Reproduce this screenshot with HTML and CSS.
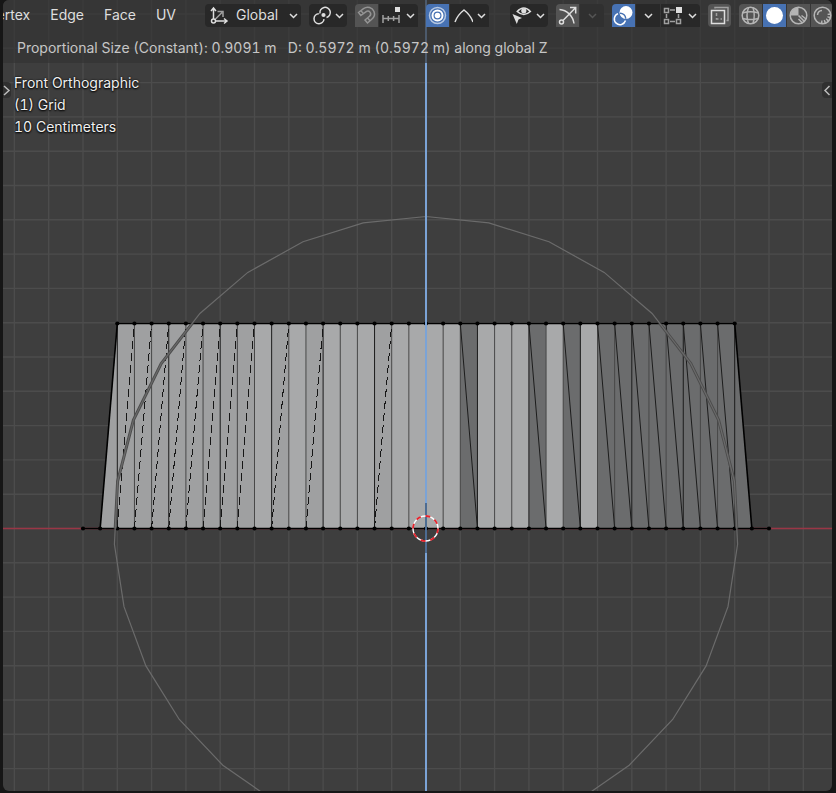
FILE: index.html
```html
<!DOCTYPE html>
<html lang="en">
<head>
<meta charset="utf-8">
<title>3D Viewport</title>
<link rel="stylesheet" href="styles.css">
</head>
<body>
<main class="editor">
  <svg class="scene" viewBox="3 0 829 791" preserveAspectRatio="xMidYMid slice" aria-label="Front orthographic view of a grid mesh">
    <defs>
      <clipPath id="mesh-clip"><path d="M117 323.500H735L752 528.500H100Z"/></clipPath>
    </defs>
    <g id="grid" class="grid"></g>
    <path class="axis-x" d="M0 528.500H836"/>
    <g id="faces"></g>
    <g id="edges"></g>
    <g id="circle"></g>
    <path class="axis-z" d="M426 0V503M426 553V793"/>
    <path class="axis-z-dim" d="M426 503V553"/>
    <circle class="cursor-base" cx="425.500" cy="528.500" r="12.500"/>
    <circle class="cursor-dash" cx="425.500" cy="528.500" r="12.500" pathLength="160"/>
  </svg>

  <header class="header">
    <nav class="menus">
      <button class="menu">Vertex</button>
      <button class="menu">Edge</button>
      <button class="menu">Face</button>
      <button class="menu">UV</button>
    </nav>

    <div class="orientation">
      <svg class="icon" viewBox="0 0 23 23"><path class="dim" d="M7 15.500L14 8.500M9.500 7.500H15V13"/><path d="M5.500 15V4M3 7L5.500 4L8 7M7.500 17H19M16 14.500L19 17L16 19.500"/><circle cx="5.500" cy="17" r="2"/></svg>
      <select aria-label="Transform orientation"><option>Global</option><option>Local</option><option>Normal</option></select>
      <svg class="chevron" viewBox="0 0 11 11"><path d="M2 4L5.500 7.500L9 4"/></svg>
    </div>

    <button class="pop" aria-label="Pivot point">
      <svg class="icon" viewBox="0 0 23 23"><path d="M11 9.500A5.200 5.200 0 1 1 17.500 13.500M9.800 9.700A5 5 0 1 0 15 15.200"/><circle class="solid" cx="14.500" cy="11" r="2.100"/></svg>
      <svg class="chevron" viewBox="0 0 11 11"><path d="M2 4L5.500 7.500L9 4"/></svg>
    </button>

    <div class="joined">
      <button class="toggle raised" aria-label="Snap">
        <svg class="icon muted" viewBox="0 0 23 23"><path d="M3.500 8.500L8.500 4.600C12.500 1.800 17.500 3.500 19 7.500C20.500 11.500 18.500 14 16.500 15.500L12.500 19L10 16L14.500 12.300C17.500 9.500 14 5.500 10.800 7.800L5.800 11.500ZM6 6.600L8.200 9.600M12.500 14L15 16.800"/></svg>
      </button>
      <button class="pop" aria-label="Snap to increment">
        <svg class="icon" viewBox="0 0 23 23"><path class="dim" d="M4 14.500H20M4 11V19M20 11V19M9.300 12V17M14.600 12V17"/><rect class="solid" x="16" y="3" width="5" height="5"/></svg>
        <svg class="chevron" viewBox="0 0 11 11"><path d="M2 4L5.500 7.500L9 4"/></svg>
      </button>
    </div>

    <div class="joined">
      <button class="toggle active" aria-label="Proportional editing">
        <svg class="icon" viewBox="0 0 23 23"><circle class="solid" cx="11.500" cy="11.500" r="2.800"/><circle class="heavy" cx="11.500" cy="11.500" r="5"/><circle class="faint" cx="11.500" cy="11.500" r="8"/></svg>
      </button>
      <button class="pop" aria-label="Proportional falloff">
        <svg class="icon" viewBox="0 0 23 23"><path d="M5 18Q7.500 11 14 6Q20.500 11 23 18"/></svg>
        <svg class="chevron" viewBox="0 0 11 11"><path d="M2 4L5.500 7.500L9 4"/></svg>
      </button>
    </div>

    <div class="tools">
      <button class="pop" aria-label="Visibility">
        <svg class="icon" viewBox="0 0 23 23"><path d="M7.200 7.500Q13.800 .5 20.400 7.500Q13.800 13.500 7.200 7.500Z"/><circle class="solid" cx="13.800" cy="6.800" r="2.600"/><path class="solid" d="M2.500 10L12 14L8.500 15.500L6.800 20Z"/></svg>
        <svg class="chevron" viewBox="0 0 11 11"><path d="M2 4L5.500 7.500L9 4"/></svg>
      </button>

      <div class="joined">
        <button class="toggle raised" aria-label="Gizmos">
          <svg class="icon" viewBox="0 0 23 23"><circle cx="5.500" cy="18" r="2"/><path d="M7 16.500L19.500 3.700M14 3.500H19.700V9.500M3.500 5.500C11 6 17 12 18 19.500"/></svg>
        </button>
        <button class="drop off" aria-label="Gizmo options"><svg class="chevron" viewBox="0 0 11 11"><path d="M2 4L5.500 7.500L9 4"/></svg></button>
      </div>

      <div class="joined">
        <button class="toggle active" aria-label="Overlays">
          <svg class="icon" viewBox="0 0 23 23"><circle class="solid" cx="14" cy="8.500" r="6.500"/><path d="M6 9.600A5.700 5.700 0 1 0 13.500 16.500"/><path class="cut" d="M8 9.200A5.700 5.700 0 0 1 13.800 14.800"/></svg>
        </button>
        <button class="drop" aria-label="Overlay options"><svg class="chevron" viewBox="0 0 11 11"><path d="M2 4L5.500 7.500L9 4"/></svg></button>
        <button class="pop" aria-label="Mesh edit overlays">
          <svg class="icon" viewBox="0 0 23 23"><path class="dim" d="M3.500 4.500H7.500V8.500H3.500ZM3.500 15.500H7.500V19.500H3.500ZM15.500 15.500H19.500V19.500H15.500ZM9 6H14M9 17.500H14M5.500 10V14M17.500 10V14"/><rect class="solid" x="15" y="3" width="6" height="6"/></svg>
          <svg class="chevron" viewBox="0 0 11 11"><path d="M2 4L5.500 7.500L9 4"/></svg>
        </button>
      </div>

      <button class="toggle raised single" aria-label="X-ray">
        <svg class="icon" viewBox="0 0 23 23"><path d="M3.500 6.500H16.500V19.500H3.500Z"/><path class="dim" d="M7 4.500V3.500H20V16.500H18.500"/><path class="dim" stroke-dasharray="3 2" d="M8.500 9V15H14"/></svg>
      </button>

      <div class="joined">
        <button class="toggle raised" aria-label="Wireframe">
          <svg class="icon soft" viewBox="0 0 23 23"><circle cx="11.500" cy="11.500" r="8.300"/><path d="M3.500 9Q11.500 6.500 19.500 9M3.500 14.500Q11.500 16.500 19.500 14.500M9.500 3.500Q6.500 11.500 9.500 19.500M14 3.500Q16.500 11.500 14 19.500"/></svg>
        </button>
        <button class="toggle active" aria-label="Solid">
          <svg class="icon" viewBox="0 0 23 23"><circle class="solid" cx="11.500" cy="11.500" r="8.500"/></svg>
        </button>
        <button class="toggle raised" aria-label="Material preview">
          <svg class="icon soft" viewBox="0 0 23 23"><circle cx="11.500" cy="11.500" r="8.300"/><path class="solid" d="M11.500 3.500V11.500H3.500A8 8 0 0 1 11.500 3.500Z"/><path d="M11.500 11.500L17.500 17.500M14.500 11.500L19 15M11.500 15L15.500 19"/></svg>
        </button>
        <button class="toggle raised" aria-label="Rendered">
          <svg class="icon soft" viewBox="0 0 23 23"><circle cx="11.500" cy="11.500" r="8.300"/><path d="M6.500 11A5 5 0 0 1 11 6.500"/><path stroke-dasharray="1.500 1.500" stroke-width="3" d="M18 9.500A7 7 0 0 1 8.500 17.500"/></svg>
        </button>
      </div>
    </div>
  </header>

  <p class="status">Proportional Size (Constant): 0.9091 m &nbsp; D: 0.5972 m (0.5972 m) along global Z</p>

  <section class="view">
    <button class="region-tab" aria-label="Show toolbar"><svg viewBox="0 0 8 16"><path d="M1 4L6 8.500L1 13"/></svg></button>
    <div class="info">
      <div>Front Orthographic</div>
      <div>(1) Grid</div>
      <div>10 Centimeters</div>
    </div>
    <button class="region-tab right" aria-label="Show sidebar"><svg viewBox="0 0 8 16"><path d="M6.500 4L2 8.500L6.500 13"/></svg></button>
  </section>
</main>
<script src="scene.js"></script>
</body>
</html>
```
FILE: styles.css
```css
* { box-sizing: border-box; }

body {
  margin: 0;
  background: #161616;
  color: #dedede;
  font: 14px/22px Inter, "Noto Sans", sans-serif;
  font-variant-numeric: tabular-nums;
}

.editor {
  position: relative;
  min-height: calc(100vh - 2px);
  margin: 0 4px 2px 3px;
  border-radius: 6px;
  background: #3e3e3e;
  overflow: hidden;
}

/* Scene drawing, behind the header and the overlays */
.scene { position: absolute; inset: 0; width: 100%; height: 100%; }
.grid { stroke: #4c4c4c; stroke-width: 1.4; }
.axis-x { stroke: #9a3646; stroke-width: 1.3; }
.axis-z { stroke: #7ba3d6; stroke-width: 2; }
.axis-z-dim { stroke: #4d6c92; stroke-width: 2; }
.face-light { fill: #a8a9aa; }
.face-mid { fill: #9fa0a1; }
.face-dark { fill: #6b6c6d; }
.edge { stroke: #1c1c1c; stroke-width: 1; }
.edge-soft { stroke: #484848; stroke-width: 1; }
.edge-bold { stroke: #000; stroke-width: 1.6; }
.edge-dash { stroke: #161616; stroke-width: 1; stroke-dasharray: 8 4; shape-rendering: crispEdges; }
.vertex { fill: #000; }
.influence { fill: none; stroke: #6b6b6b; stroke-width: 1.2; }
.influence-mesh { fill: none; stroke: #4c4c4c; stroke-width: 3; clip-path: url(#mesh-clip); }
.cursor-base { fill: none; stroke: #fff; stroke-width: 1.4; }
.cursor-dash { fill: none; stroke: #e8222c; stroke-width: 1.8; stroke-dasharray: 10 10; }

/* Header */
.header, .status { position: relative; background: rgba(50, 50, 50, .65); }
.header { display: flex; gap: 8px; height: 31px; padding-top: 4px; }
.menus {
  display: flex;
  flex: 0 0 194px;
  justify-content: flex-end;
  padding-right: 11px;
  overflow: hidden;
}
button, select {
  margin: 0;
  padding: 0;
  border: 0;
  background: none;
  color: inherit;
  font: inherit;
}
.menu { padding: 0 10px; height: 22px; }
.orientation, .pop, .drop, .toggle {
  display: flex;
  flex: none;
  align-items: center;
  height: 23px;
}
.orientation, .pop, .drop { background: #282828; }
.orientation { position: relative; width: 96px; border-radius: 4px; padding-left: 3px; }
.orientation select { appearance: none; flex: 1; height: 22px; align-self: flex-start; padding-left: 5px; }
.orientation .chevron { margin-right: 2px; }
.pop { width: 38px; border-radius: 4px; justify-content: space-between; padding: 0 2px 0 0; }
.drop { width: 24px; justify-content: center; }
.drop.off { background: #303030; color: #555; }
.toggle { width: 23px; justify-content: center; }
.raised { background: #545454; }
.active { background: #4772b3; color: #fff; }
.single { border-radius: 4px; }
.joined { display: flex; flex: none; gap: 1px; border-radius: 4px; overflow: hidden; }
.joined .pop { width: 39px; border-radius: 0; }
.tools { display: flex; gap: 8px; margin-left: 13px; }

.icon { width: 23px; height: 23px; }
.chevron { width: 11px; height: 11px; }
.icon, .chevron, .region-tab svg { flex: none; fill: none; stroke: currentColor; stroke-width: 1.5; }
.solid { fill: currentColor; stroke: none; }
.heavy { stroke-width: 2; }
.dim { stroke: #a0a0a0; }
.faint { stroke: #b5c7e1; }
.cut { stroke: #4772b3; }
.muted { color: #949494; }
.soft { color: #b4b4b4; }

.status { height: 32px; margin: 0; padding-left: 14px; line-height: 33px; color: #c6c6c6; white-space: nowrap; overflow: hidden; }

/* Viewport overlays */
.view { position: relative; display: flex; align-items: flex-start; padding-top: 9px; }
.info { flex: 1; padding-left: 3px; color: #f0f0f0; text-shadow: 0 0 2px #000, 0 1px 2px #000; }
.region-tab { width: 8px; height: 16px; margin-top: 10px; background: #303030; border-radius: 0 4px 4px 0; color: #bbb; }
.region-tab.right { width: 10px; border-radius: 4px 0 0 4px; }
.region-tab svg { display: block; width: 8px; height: 16px; margin: 0 auto; }
```
FILE: scene.js
```js
const NS = "http://www.w3.org/2000/svg";
const CX = 426, TOP = 323.5, BASE = 528.5, STEP = 17.15;

function add(group, tag, attrs) {
  const el = document.createElementNS(NS, tag);
  for (const name in attrs) el.setAttribute(name, attrs[name]);
  document.getElementById(group).appendChild(el);
}
const px = k => CX + k * STEP;
const line = (cls, x1, y1, x2, y2, group = "edges") =>
  add(group, "path", { class: cls, d: `M${x1} ${y1}L${x2} ${y2}` });

// Background grid, one line per 10 cm
for (let k = -15; k <= 13; k++) {
  line("", px(2 * k), 0, px(2 * k), 793, "grid");
  line("", 0, BASE + 2 * k * STEP, 836, BASE + 2 * k * STEP, "grid");
}

// Raised faces between the columns
const mid = [-18, -17, -16, -15, -14, -13, -12, -11, -9, -7, -3];
const dark = [2, 6, 8, 10, 11, 12, 13, 14, 15, 16, 17];
for (let k = -18; k < 18; k++) {
  const shade = mid.includes(k) ? "mid" : dark.includes(k) ? "dark" : "light";
  add("faces", "rect", { class: "face-" + shade, x: px(k), y: TOP, width: STEP + 0.3, height: BASE - TOP });
}
add("faces", "path", { class: "face-mid", d: `M${px(-18) + 0.3} ${TOP}V${BASE}H${px(-19)}Z` });
add("faces", "path", { class: "face-dark", d: `M${px(18)} ${TOP}V${BASE}H${px(19)}Z` });

// Columns and diagonals
for (let k = -18; k <= 18; k++) line(k % 3 ? "edge-soft" : "edge", px(k), TOP, px(k), BASE);
mid.forEach(k => line("edge-dash", px(k), BASE, px(k + 1), TOP));
dark.forEach(k => line("edge", px(k), TOP, px(k + 1), BASE));
line("edge-bold", px(-19), BASE, px(-18), TOP);
line("edge-bold", px(18), TOP, px(19), BASE);
line("edge-bold", px(-18), TOP, px(18), TOP);
line("edge-bold", px(-20), BASE, px(20), BASE);

for (let k = -20; k <= 20; k++) {
  add("edges", "circle", { class: "vertex", cx: px(k), cy: BASE, r: 2.1 });
  if (Math.abs(k) <= 18) add("edges", "circle", { class: "vertex", cx: px(k), cy: TOP, r: 2.1 });
}

// Area of influence of the proportional edit
const points = Array.from({ length: 31 }, (_, i) => {
  const a = i / 31 * 2 * Math.PI;
  return (CX + 312 * Math.sin(a)).toFixed(1) + "," + (BASE - 312 * Math.cos(a)).toFixed(1);
}).join(" ");
add("circle", "polygon", { class: "influence-mesh", points });
add("circle", "polygon", { class: "influence", points });
```
